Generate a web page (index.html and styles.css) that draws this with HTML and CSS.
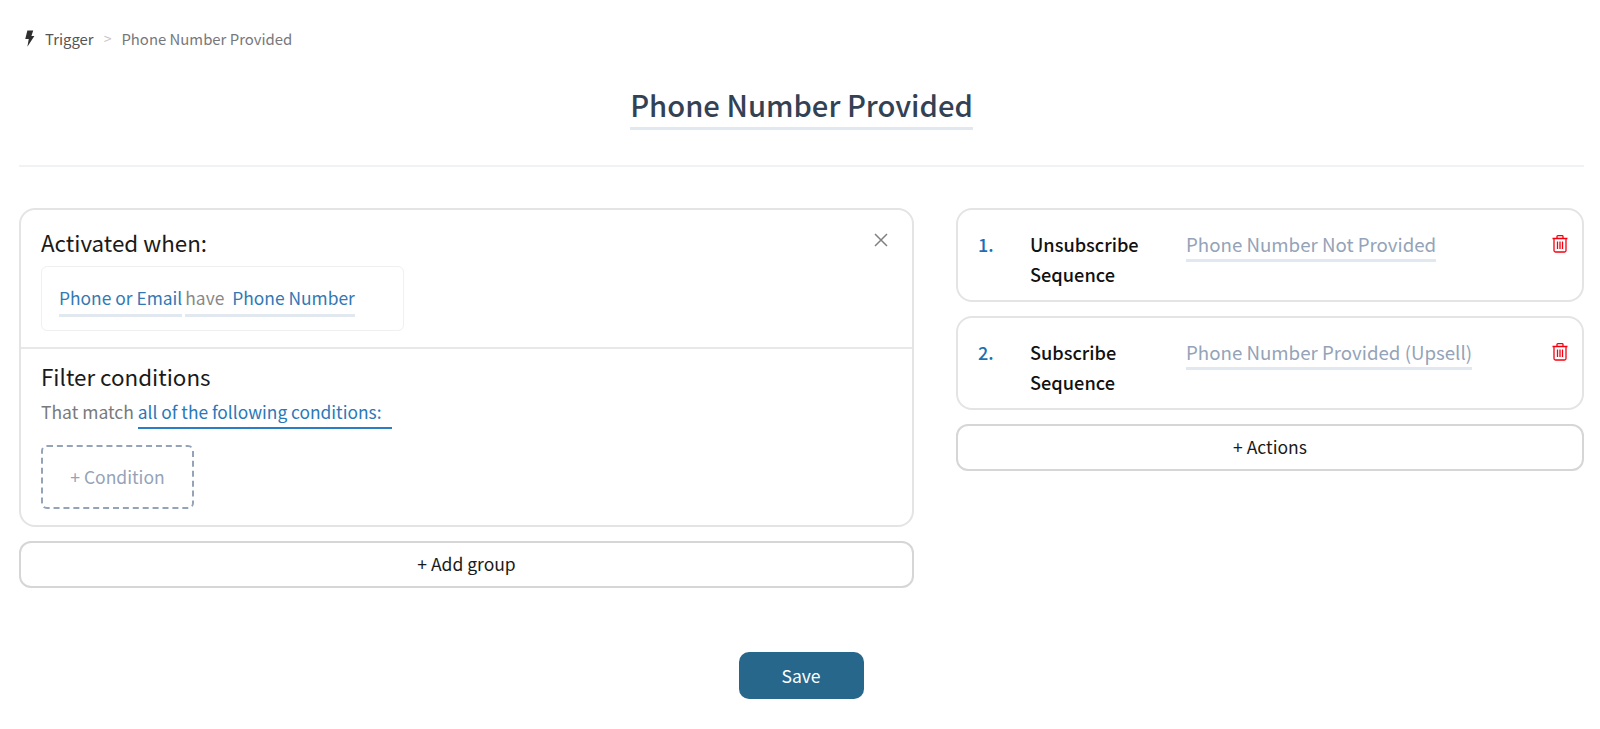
FILE: index.html
```html
<!DOCTYPE html>
<html lang="en">
<head>
    <meta charset="UTF-8">
    <meta name="viewport" content="width=device-width, initial-scale=1.0">
    <title>Phone Number Provided</title>
    <link rel="stylesheet" href="styles.css">
</head>
<body>
    <nav class="crumbs">
        <svg class="bolt" viewBox="0 0 10 16" width="11" height="17"><path d="M3 0.5H8.500L6.800 5.600H9.600L3 15.800L4.300 8.400H1Z" fill="#2f2f2f"/></svg>
        <span class="crumb-root">Trigger</span>
        <span class="crumb-sep">&gt;</span>
        <span class="crumb-page">Phone Number Provided</span>
    </nav>

    <div class="title-row">
        <h1 class="title">Phone Number Provided</h1>
    </div>
    <hr class="rule">

    <div class="columns">
        <section class="col-left">
            <div class="card group">
                <div class="group-top">
                    <svg class="close" viewBox="0 0 14 14" width="14" height="14"><path d="M1 1L13 13M13 1L1 13" stroke="#808080" stroke-width="1.5" fill="none"/></svg>
                    <h2 class="group-title">Activated when:</h2>
                    <div class="when-box">
                        <span class="pick blue">Phone or Email</span>
                        <span class="pick grey">have <span class="blue when-value">Phone Number</span></span>
                    </div>
                </div>
                <div class="group-bottom">
                    <h2 class="group-title">Filter conditions</h2>
                    <p class="match">That match <span class="match-pick">all of the following conditions:</span></p>
                    <button class="add-condition">+ Condition</button>
                </div>
            </div>
            <button class="wide-btn">+ Add group</button>
        </section>

        <section class="col-right">
            <div class="card action">
                <span class="num">1.</span>
                <span class="action-name">Unsubscribe Sequence</span>
                <div class="action-value"><span class="seq">Phone Number Not Provided</span></div>
                <svg class="trash" viewBox="0 0 16 18" width="16" height="18"><path d="M0.5 3.5H15.5M5 3.5V1.5Q5 0.7 5.8 0.7H10.2Q11 0.7 11 1.5V3.5M2 3.5V15.5Q2 17 3.5 17H12.500Q14 17 14 15.500V3.5M5.500 6.500V14M8 6.500V14M10.500 6.500V14" stroke="#f5000f" stroke-width="1.300" fill="none"/></svg>
            </div>
            <div class="card action">
                <span class="num">2.</span>
                <span class="action-name">Subscribe Sequence</span>
                <div class="action-value"><span class="seq">Phone Number Provided (Upsell)</span></div>
                <svg class="trash" viewBox="0 0 16 18" width="16" height="18"><path d="M0.5 3.5H15.5M5 3.5V1.5Q5 0.7 5.8 0.7H10.2Q11 0.7 11 1.5V3.5M2 3.5V15.5Q2 17 3.5 17H12.500Q14 17 14 15.500V3.5M5.500 6.500V14M8 6.500V14M10.500 6.500V14" stroke="#f5000f" stroke-width="1.300" fill="none"/></svg>
            </div>
            <button class="wide-btn">+ Actions</button>
        </section>
    </div>

    <div class="save-row">
        <button class="save">Save</button>
    </div>
</body>
</html>
```

FILE: styles.css
```css
* {
    box-sizing: border-box;
}
body {
    margin: 0;
    padding: 0 16px 0 19px;
    background: #fff;
    color: #1a1a1a;
    font-family: "Noto Sans CJK SC", "Noto Sans", sans-serif;
    font-size: 17.5px;
}
button {
    font-family: inherit;
    background: #fff;
    cursor: pointer;
}
.crumbs {
    display: flex;
    align-items: center;
    height: 24px;
    margin-top: 26px;
    padding-left: 5px;
    font-size: 14.9px;
}
.bolt {
    margin-right: 10px;
}
.crumb-root {
    color: #555;
}
.crumb-sep {
    color: #c4c4c4;
    margin: 0 10px;
    font-size: 14px;
}
.crumb-page {
    color: #77787c;
}
.title-row {
    display: flex;
    justify-content: center;
    margin-top: 29px;
}
.title {
    margin: 0;
    padding-top: 2px;
    font-size: 29.2px;
    font-weight: 500;
    line-height: 46px;
    color: #334155;
    border-bottom: 3px solid #e2e8f0;
}
.rule {
    border: 0;
    border-top: 2px solid #f1f2f4;
    margin: 35px 0 0;
}
.columns {
    display: grid;
    grid-template-columns: 895px 628px;
    column-gap: 42px;
    margin-top: 41px;
}
.card {
    border: 2px solid #e4e4e4;
    border-radius: 16px;
    background: #fff;
}
.group-top {
    position: relative;
    padding: 16px 20px 16px;
    border-bottom: 2px solid #e8e8e8;
}
.group-title {
    margin: 0;
    font-size: 22.4px;
    font-weight: 400;
    line-height: 32px;
    color: #1a1a1a;
}
.close {
    position: absolute;
    top: 23px;
    right: 24px;
}
.when-box {
    display: flex;
    width: 363px;
    height: 65px;
    margin-top: 8px;
    padding: 15px 17px 0;
    border: 1px solid #f0f0f0;
    border-radius: 6px;
    font-size: 17.4px;
}
.pick {
    height: 35px;
    line-height: 32px;
    border-bottom: 3px solid #e2e8f0;
    margin-right: 3px;
    white-space: nowrap;
}
.blue {
    color: #3278b4;
}
.grey {
    color: #888;
}
.when-value {
    margin-left: 4px;
}
.group-bottom {
    padding: 11px 20px 16px;
}
.match {
    margin: 6px 0 0;
    color: #7a7a7a;
    line-height: 28px;
}
.match-pick {
    display: inline-block;
    width: 254px;
    height: 31px;
    color: #2a78b8;
    font-size: 17.35px;
    border-bottom: 2px solid #2a7fc4;
}
.add-condition {
    display: block;
    width: 153px;
    height: 64px;
    margin-top: 16px;
    padding-bottom: 3px;
    border: 2px dashed #94a3b8;
    border-radius: 6px;
    color: #94a3b8;
    font-size: 17.5px;
}
.wide-btn {
    display: block;
    width: 100%;
    height: 47px;
    margin-top: 14px;
    padding-bottom: 3px;
    border: 2px solid #d6d6d6;
    border-radius: 12px;
    color: #1a1a1a;
    font-size: 17.5px;
}
.action {
    display: flex;
    align-items: flex-start;
    padding: 19px 14px 0 20px;
    height: 94px;
    margin-bottom: 14px;
}
.action + .wide-btn {
    margin-top: 0;
}
.num {
    width: 52px;
    flex: none;
    color: #1b6fb5;
    font-size: 18px;
    font-weight: 500;
    line-height: 30px;
}
.action-name {
    width: 156px;
    flex: none;
    font-size: 18.2px;
    line-height: 30px;
    font-weight: 500;
    color: #111;
}
.action-value {
    flex: 1;
}
.seq {
    display: inline-block;
    color: #94a3b8;
    font-size: 18.7px;
    line-height: 30px;
    border-bottom: 3px solid #e2e8f0;
}
.trash {
    flex: none;
    margin-top: 6px;
}
.save-row {
    display: flex;
    justify-content: center;
    margin-top: 64px;
    padding-right: 1px;
}
.save {
    width: 125px;
    height: 47px;
    border: 0;
    border-radius: 10px;
    background: #27678c;
    color: #fff;
    font-size: 17.5px;
}
```
